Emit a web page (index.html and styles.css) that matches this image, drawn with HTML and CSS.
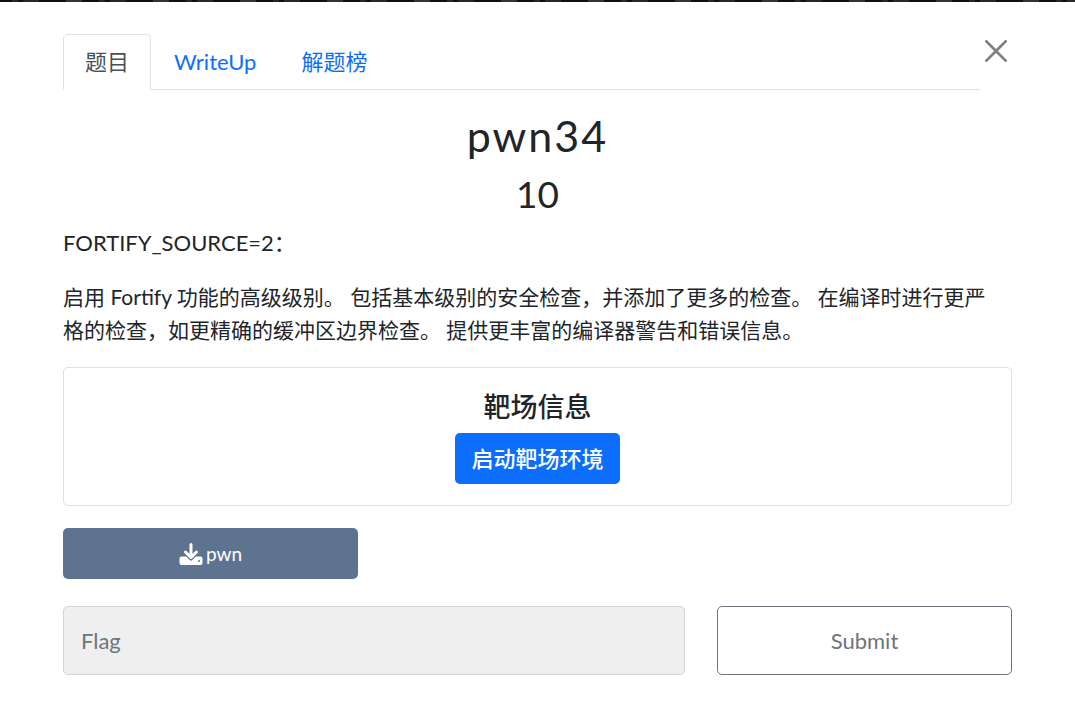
FILE: index.html
```
<!DOCTYPE html>
<html lang="zh-CN">
<head>
    <meta charset="UTF-8">
    <meta name="viewport" content="width=device-width, initial-scale=1.0">
    <title>pwn34</title>
    <link rel="stylesheet" href="styles.css">
</head>
<body>
    <div class="backdrop"></div>
    <main class="modal">
        <div class="modal-top">
            <nav class="tabs">
                <a class="tab active" href="#challenge">题目</a>
                <a class="tab" href="#writeup">WriteUp</a>
                <a class="tab" href="#solves">解题榜</a>
            </nav>
            <button class="close" type="button" aria-label="Close">
                <svg viewBox="0 0 16 16" width="22" height="22" fill="currentColor"><path d="M.293.293a1 1 0 0 1 1.414 0L8 6.586 14.293.293a1 1 0 1 1 1.414 1.414L9.414 8l6.293 6.293a1 1 0 0 1-1.414 1.414L8 9.414l-6.293 6.293a1 1 0 0 1-1.414-1.414L6.586 8 .293 1.707a1 1 0 0 1 0-1.414z"/></svg>
            </button>
        </div>

        <section id="challenge">
            <h2 class="name">pwn34</h2>
            <h3 class="value">10</h3>
            <div class="desc">
                <p class="lead">FORTIFY_SOURCE=2：</p>
                <p>启用 Fortify 功能的高级级别。 包括基本级别的安全检查，并添加了更多的检查。 在编译时进行更严<br>格的检查，如更精确的缓冲区边界检查。 提供更丰富的编译器警告和错误信息。</p>
            </div>

            <div class="card">
                <h5 class="card-title">靶场信息</h5>
                <button class="btn btn-primary" type="button">启动靶场环境</button>
            </div>

            <div class="files">
                <a class="btn btn-file" href="#pwn">
                    <svg viewBox="0 0 24 24" width="24" height="24" aria-hidden="true">
                        <path d="M2.5 14.5h5l2.6 2.5a2.8 2.8 0 0 0 3.8 0l2.6-2.5h5a2 2 0 0 1 2 2v4.5a2 2 0 0 1-2 2h-19a2 2 0 0 1-2-2v-4.5a2 2 0 0 1 2-2z" fill="#fff"/>
                        <path d="M12 2v13M6.5 10l5.5 5.5 5.5-5.5" fill="none" stroke="#5e738f" stroke-width="5"/>
                        <path d="M12 2.5v13M6.5 10l5.5 5.5 5.5-5.5" fill="none" stroke="#fff" stroke-width="3" stroke-linecap="round" stroke-linejoin="round"/>
                        <circle cx="20" cy="19" r="1" fill="#5e738f"/>
                    </svg>
                    <span>pwn</span>
                </a>
            </div>

            <form class="submit-row">
                <input class="flag" type="text" name="flag" placeholder="Flag" aria-label="Flag">
                <button class="submit" type="submit">Submit</button>
            </form>
        </section>
    </main>
</body>
</html>
```
FILE: styles.css
```
* {
    box-sizing: border-box;
}

body {
    margin: 0;
    background-color: #fff;
    color: #212529;
    font-family: Lato, "Noto Sans CJK SC", sans-serif;
    font-size: 22px;
    line-height: 32px;
}

/* sliver of the dimmed page above the dialog */
.backdrop {
    height: 2px;
    background: repeating-linear-gradient(90deg, #120f10 0 12px, #292728 12px 18px, #120f10 18px 23px, #292728 23px 39px, #120f10 39px 66px, #353334 66px 82px, #120f10 82px 87px);
}

.modal {
    padding: 32px 63px 28px;
    background-color: #fff;
    border-radius: 4px 4px 0 0;
}

.modal-top {
    display: flex;
    align-items: flex-start;
}

.tabs {
    display: flex;
    flex: 1;
    gap: 1px;
    border-bottom: 1px solid #dee2e6;
}

.tab {
    padding: 11px 21px;
    margin-bottom: -1px;
    border: 1px solid transparent;
    border-radius: 5px 5px 0 0;
    color: #0d6efd;
    text-decoration: none;
}

.tab.active {
    color: #495057;
    background-color: #fff;
    border-color: #dee2e6 #dee2e6 #fff;
}

.close {
    display: flex;
    padding: 6px 5px;
    border: 0;
    background: none;
    color: #7f7f7f;
    cursor: pointer;
}

.name,
.value {
    margin: 0;
    font-weight: 400;
    text-align: center;
}

.name {
    padding-top: 20px;
    font-size: 43px;
    line-height: 52px;
    letter-spacing: 2px;
}

.value {
    margin: 9px 0 10px;
    font-size: 37px;
    line-height: 45px;
}

.desc {
    font-size: 21px;
    line-height: 33px;
}

.desc p {
    margin: 0 0 21px;
}

.desc .lead {
    font-size: 22px;
}

.card {
    display: flex;
    flex-direction: column;
    align-items: center;
    gap: 10px;
    padding: 22px 21px 21px;
    border: 1px solid #dfdfdf;
    border-radius: 5px;
}

.card-title {
    margin: 0;
    font-size: 27px;
    font-weight: 500;
    line-height: 33px;
}

.btn {
    padding: 9px 16px;
    border: 0;
    border-radius: 5px;
    color: #fff;
    font: inherit;
    line-height: 33px;
    text-align: center;
    text-decoration: none;
    cursor: pointer;
}

.btn-primary {
    background-color: #0d6efd;
    font-weight: 500;
}

.files {
    display: grid;
    grid-template-columns: repeat(3, 1fr);
    gap: 32px;
    margin: 22px 0 27px;
}

.btn-file {
    display: flex;
    align-items: center;
    justify-content: center;
    gap: 3px;
    background-color: #5e738f;
    font-size: 19px;
}

.submit-row {
    display: grid;
    grid-template-columns: repeat(3, 1fr);
    gap: 32px;
}

.flag,
.submit {
    height: 69px;
    border-radius: 5px;
    font: inherit;
}

.flag {
    grid-column: span 2;
    padding: 0 17px;
    border: 1px solid #ced4da;
    background-color: #efefef;
}

.flag::placeholder {
    color: #6c757d;
    opacity: 1;
}

.submit {
    border: 1px solid #6c757d;
    background-color: #fff;
    color: #6c757d;
    cursor: pointer;
}
```
